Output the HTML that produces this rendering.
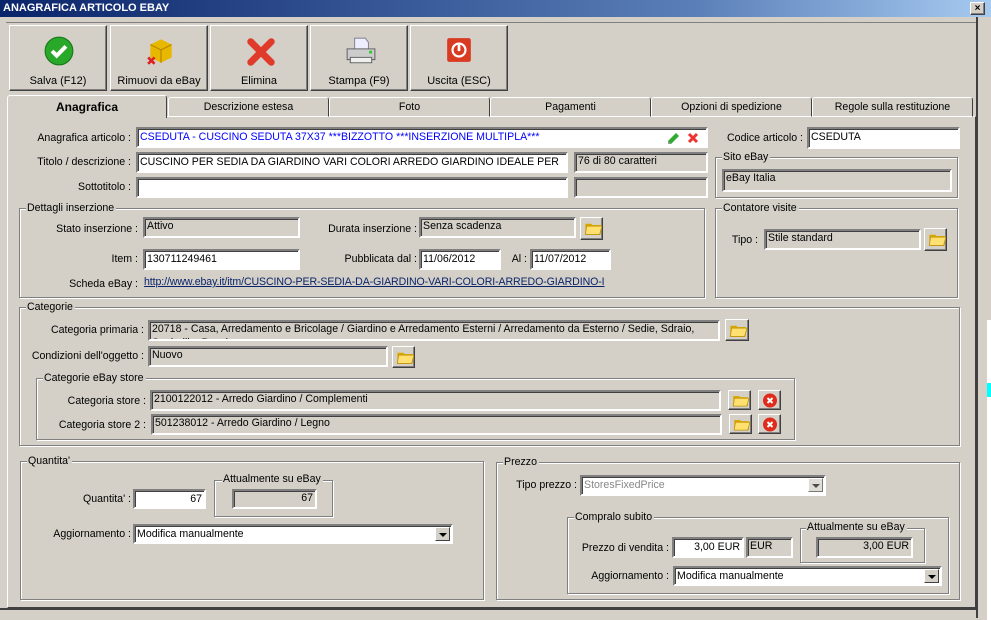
<!DOCTYPE html>
<html><head><meta charset="utf-8"><style>
*{box-sizing:border-box;margin:0;padding:0}
body{width:991px;height:618px;overflow:hidden;background:#d4d0c8;font-family:"Liberation Sans",sans-serif;font-size:10.6px;color:#000;position:relative}
.a{position:absolute}
.l{position:absolute;text-align:right;white-space:nowrap;line-height:14px}
.in{position:absolute;background:#fff;border:2px solid;border-color:#808080 #fff #fff #808080;box-shadow:inset 1px 1px 0 #404040;padding:1px 2px;white-space:nowrap;overflow:hidden;line-height:14px}
.ro{position:absolute;background:#d4d0c8;border:2px solid;border-color:#808080 #fff #fff #808080;box-shadow:inset 1px 1px 0 #404040;padding:0 2px;white-space:nowrap;overflow:hidden;line-height:14px}
.g{position:absolute;border:1px solid #808080;box-shadow:1px 1px 0 #fff,inset 1px 1px 0 #fff}
.g>span{position:absolute;top:-8px;left:6px;background:#d4d0c8;padding:0 2px 0 1px;line-height:14px;white-space:nowrap}
.btn{position:absolute;background:#d4d0c8;border:1px solid;border-color:#fff #404040 #404040 #fff;box-shadow:inset -1px -1px 0 #808080}
.btn svg{position:absolute;left:2px;top:1px}
.tb{position:absolute;top:25px;width:98px;height:66px;background:#d4d0c8;border:1px solid;border-color:#fff #404040 #404040 #fff;box-shadow:inset -1px -1px 0 #808080;text-align:center}
.tb .t{position:absolute;left:0;right:0;top:49px;font-size:11px}
.tb svg{position:absolute;left:34px;top:10px}
.tab{position:absolute;top:97px;height:20px;border:1px solid;border-color:#fff #404040 transparent #fff;border-radius:3px 3px 0 0;text-align:center;line-height:18px}
.dd{position:absolute;right:1px;top:1px;width:15px;height:14px;background:#d4d0c8;border:1px solid;border-color:#fff #404040 #404040 #fff}
.dd:after{content:"";position:absolute;left:3px;top:5px;border:4px solid transparent;border-top:4px solid #000;border-bottom:0}
</style></head><body>
<div class="a" style="left:0;top:0;width:991px;height:17px;background:linear-gradient(90deg,#0a246a,#5a7fb8 70%,#a6caf0);color:#fff;font-weight:bold;font-size:11px;line-height:17px;padding-left:3px">ANAGRAFICA ARTICOLO EBAY</div>
<div class="btn" style="left:970px;top:2px;width:15px;height:13px;font-size:10px;line-height:11px;text-align:center;font-weight:bold">×</div>
<div class="a" style="left:976px;top:17px;width:2px;height:601px;background:#404040"></div>
<div class="a" style="left:978px;top:17px;width:13px;height:601px;background:#d4d0c8"></div>
<div class="a" style="left:987px;top:320px;width:4px;height:300px;background:#fff"></div>
<div class="a" style="left:987px;top:383px;width:4px;height:14px;background:#0ff"></div>
<div class="a" style="left:0;top:608px;width:976px;height:10px;background:#d4d0c8;border-top:2px solid #404040"></div>
<div class="a" style="left:6px;top:22px;width:970px;height:1px;background:#808080"></div>

<div class="tb" style="left:9px"><svg width="30" height="30" viewBox="0 0 26 26"><circle cx="13" cy="13" r="12" fill="#2aa82a" stroke="#177a17"/><path d="M7 13l4 4 8-8" stroke="#fff" stroke-width="3.5" fill="none"/></svg><div class="t">Salva (F12)</div></div>
<div class="tb" style="left:110px"><svg width="32" height="30" viewBox="0 0 28 28"><path d="M4 8l10-5 10 5v12l-10 5-10-5z" fill="#e8b800"/><path d="M4 8l10 5 10-5" stroke="#b08000" fill="none"/><path d="M14 13v12" stroke="#b08000"/><path d="M2 20l6 6M8 20l-6 6" stroke="#d22" stroke-width="2.5"/></svg><div class="t">Rimuovi da eBay</div></div>
<div class="tb" style="left:210px"><svg width="32" height="32" viewBox="0 0 28 28"><path d="M5 5l18 18M23 5L5 23" stroke="#e03a2a" stroke-width="6" stroke-linecap="round"/></svg><div class="t">Elimina</div></div>
<div class="tb" style="left:310px"><svg width="32" height="30" viewBox="0 0 30 28"><path d="M9 2h10l3 4v8H9z" fill="#eef" stroke="#889"/><path d="M2 12h26v10H2z" fill="#ccc" stroke="#666"/><path d="M5 20h20v5H5z" fill="#eee" stroke="#666"/><circle cx="24" cy="15" r="1.5" fill="#3c3"/></svg><div class="t">Stampa (F9)</div></div>
<div class="tb" style="left:410px"><svg width="28" height="28" viewBox="0 0 26 26"><rect x="2" y="2" width="22" height="22" rx="2" fill="#d83a22"/><circle cx="13" cy="13" r="6" stroke="#fff" stroke-width="2" fill="none"/><path d="M13 8v6" stroke="#fff" stroke-width="2.5"/></svg><div class="t">Uscita (ESC)</div></div>

<div class="a" style="left:7px;top:116px;width:969px;height:492px;border:1px solid;border-color:#fff #404040 #404040 #fff"></div>
<div class="tab" style="left:168px;width:161px">Descrizione estesa</div>
<div class="tab" style="left:329px;width:161px">Foto</div>
<div class="tab" style="left:490px;width:161px">Pagamenti</div>
<div class="tab" style="left:651px;width:161px">Opzioni di spedizione</div>
<div class="tab" style="left:812px;width:161px">Regole sulla restituzione</div>
<div class="tab" style="left:7px;top:95px;width:160px;height:23px;background:#d4d0c8;font-weight:bold;font-size:12px;line-height:22px;border-bottom:none">Anagrafica</div>

<div class="l" style="right:860px;top:131px">Anagrafica articolo :</div>
<div class="in" style="left:136px;top:127px;width:572px;height:21px;color:#00f">CSEDUTA - CUSCINO SEDUTA 37X37 ***BIZZOTTO ***INSERZIONE MULTIPLA***</div>
<svg class="a" style="left:666px;top:131px" width="14" height="14" viewBox="0 0 14 14"><path d="M2 10l8-8 3 3-8 8-3 0z" fill="#3a3"/><path d="M2 10l0 3 3 0" fill="#999"/></svg>
<svg class="a" style="left:687px;top:132px" width="12" height="12" viewBox="0 0 12 12"><path d="M2 2l8 8M10 2L2 10" stroke="#e33" stroke-width="3"/></svg>
<div class="l" style="right:860px;top:155px">Titolo / descrizione :</div>
<div class="in" style="left:136px;top:152px;width:432px;height:21px">CUSCINO PER SEDIA DA GIARDINO VARI COLORI ARREDO GIARDINO IDEALE PER</div>
<div class="ro" style="left:574px;top:152px;width:134px;height:21px">76 di 80 caratteri</div>
<div class="l" style="right:860px;top:180px">Sottotitolo :</div>
<div class="in" style="left:136px;top:177px;width:432px;height:21px"></div>
<div class="ro" style="left:574px;top:177px;width:134px;height:21px"></div>

<div class="l" style="right:188px;top:131px">Codice articolo :</div>
<div class="in" style="left:807px;top:127px;width:153px;height:22px">CSEDUTA</div>
<div class="g" style="left:715px;top:157px;width:243px;height:41px"><span>Sito eBay</span></div>
<div class="ro" style="left:722px;top:169px;width:230px;height:23px">eBay Italia</div>

<div class="g" style="left:19px;top:208px;width:686px;height:90px"><span>Dettagli inserzione</span></div>
<div class="l" style="right:853px;top:222px">Stato inserzione :</div>
<div class="ro" style="left:143px;top:217px;width:157px;height:21px">Attivo</div>
<div class="l" style="right:574px;top:222px">Durata inserzione :</div>
<div class="ro" style="left:419px;top:217px;width:157px;height:21px">Senza scadenza</div>
<div class="btn" style="left:580px;top:217px;width:23px;height:23px"><svg width="19" height="19" viewBox="2 4 16 14"><path d="M4 7h5l1 1h7v8H4z" fill="#d9a800"/><path d="M5 9h13l-2 7H4z" fill="#ffe070" stroke="#c09000" stroke-width=".7"/></svg></div>
<div class="l" style="right:853px;top:252px">Item :</div>
<div class="in" style="left:143px;top:249px;width:157px;height:21px">130711249461</div>
<div class="l" style="right:574px;top:252px">Pubblicata dal :</div>
<div class="in" style="left:419px;top:249px;width:82px;height:21px">11/06/2012</div>
<div class="l" style="right:464px;top:252px">Al :</div>
<div class="in" style="left:530px;top:249px;width:81px;height:21px">11/07/2012</div>
<div class="l" style="right:853px;top:277px">Scheda eBay :</div>
<div class="a" style="left:144px;top:275px;color:#0a246a;text-decoration:underline;line-height:14px;letter-spacing:-0.1px">http://www.ebay.it/itm/CUSCINO-PER-SEDIA-DA-GIARDINO-VARI-COLORI-ARREDO-GIARDINO-I</div>

<div class="g" style="left:715px;top:208px;width:243px;height:90px"><span>Contatore visite</span></div>
<div class="l" style="right:233px;top:233px">Tipo :</div>
<div class="ro" style="left:764px;top:229px;width:157px;height:21px">Stile standard</div>
<div class="btn" style="left:924px;top:228px;width:23px;height:23px"><svg width="19" height="19" viewBox="2 4 16 14"><path d="M4 7h5l1 1h7v8H4z" fill="#d9a800"/><path d="M5 9h13l-2 7H4z" fill="#ffe070" stroke="#c09000" stroke-width=".7"/></svg></div>

<div class="g" style="left:19px;top:307px;width:941px;height:139px"><span>Categorie</span></div>
<div class="l" style="right:847px;top:323px">Categoria primaria :</div>
<div class="ro" style="left:148px;top:320px;width:572px;height:21px;white-space:normal;line-height:14px">20718 - Casa, Arredamento e Bricolage / Giardino e Arredamento Esterni / Arredamento da Esterno / Sedie, Sdraio, Sgabelli e Panche</div>
<div class="btn" style="left:725px;top:319px;width:24px;height:22px"><svg width="19" height="19" viewBox="2 4 16 14"><path d="M4 7h5l1 1h7v8H4z" fill="#d9a800"/><path d="M5 9h13l-2 7H4z" fill="#ffe070" stroke="#c09000" stroke-width=".7"/></svg></div>
<div class="l" style="right:847px;top:349px">Condizioni dell'oggetto :</div>
<div class="ro" style="left:148px;top:346px;width:240px;height:21px">Nuovo</div>
<div class="btn" style="left:392px;top:346px;width:23px;height:22px"><svg width="19" height="19" viewBox="2 4 16 14"><path d="M4 7h5l1 1h7v8H4z" fill="#d9a800"/><path d="M5 9h13l-2 7H4z" fill="#ffe070" stroke="#c09000" stroke-width=".7"/></svg></div>
<div class="g" style="left:36px;top:378px;width:759px;height:62px"><span>Categorie eBay store</span></div>
<div class="l" style="right:845px;top:394px">Categoria store :</div>
<div class="ro" style="left:150px;top:390px;width:571px;height:21px">2100122012 - Arredo Giardino / Complementi</div>
<div class="l" style="right:845px;top:418px">Categoria store 2 :</div>
<div class="ro" style="left:151px;top:414px;width:571px;height:21px">501238012 - Arredo Giardino / Legno</div>
<div class="btn" style="left:728px;top:390px;width:23px;height:20px"><svg width="18" height="17" viewBox="2 4 16 14"><path d="M4 7h5l1 1h7v8H4z" fill="#d9a800"/><path d="M5 9h13l-2 7H4z" fill="#ffe070" stroke="#c09000" stroke-width=".7"/></svg></div>
<div class="btn" style="left:758px;top:390px;width:23px;height:20px"><svg width="18" height="17" viewBox="1 1 18 16"><circle cx="10" cy="9" r="7" fill="#e02a1a"/><path d="M7.5 6.5l5 5M12.5 6.5l-5 5" stroke="#fff" stroke-width="2"/></svg></div>
<div class="btn" style="left:729px;top:414px;width:23px;height:20px"><svg width="18" height="17" viewBox="2 4 16 14"><path d="M4 7h5l1 1h7v8H4z" fill="#d9a800"/><path d="M5 9h13l-2 7H4z" fill="#ffe070" stroke="#c09000" stroke-width=".7"/></svg></div>
<div class="btn" style="left:758px;top:414px;width:23px;height:20px"><svg width="18" height="17" viewBox="1 1 18 16"><circle cx="10" cy="9" r="7" fill="#e02a1a"/><path d="M7.5 6.5l5 5M12.5 6.5l-5 5" stroke="#fff" stroke-width="2"/></svg></div>

<div class="g" style="left:20px;top:461px;width:464px;height:139px"><span>Quantita'</span></div>
<div class="l" style="right:860px;top:492px">Quantita' :</div>
<div class="in" style="left:133px;top:489px;width:73px;height:20px;text-align:right">67</div>
<div class="g" style="left:214px;top:480px;width:119px;height:37px"><span style="top:-9px;left:7px">Attualmente su eBay</span></div>
<div class="ro" style="left:232px;top:489px;width:85px;height:20px;text-align:right">67</div>
<div class="l" style="right:860px;top:527px">Aggiornamento :</div>
<div class="in" style="left:133px;top:524px;width:320px;height:20px">Modifica manualmente<div class="dd"></div></div>

<div class="g" style="left:496px;top:462px;width:464px;height:138px"><span>Prezzo</span></div>
<div class="l" style="right:414px;top:478px">Tipo prezzo :</div>
<div class="in" style="left:580px;top:475px;width:246px;height:21px;color:#888">StoresFixedPrice<div class="dd" style="opacity:.7"></div></div>
<div class="g" style="left:567px;top:517px;width:382px;height:77px"><span>Compralo subito</span></div>
<div class="l" style="right:322px;top:541px">Prezzo di vendita :</div>
<div class="in" style="left:672px;top:537px;width:72px;height:21px;text-align:right">3,00 EUR</div>
<div class="ro" style="left:746px;top:537px;width:47px;height:21px">EUR</div>
<div class="g" style="left:800px;top:528px;width:125px;height:35px"><span style="top:-9px;left:5px">Attualmente su eBay</span></div>
<div class="ro" style="left:816px;top:537px;width:97px;height:21px;text-align:right">3,00 EUR</div>
<div class="l" style="right:322px;top:569px">Aggiornamento :</div>
<div class="in" style="left:673px;top:566px;width:269px;height:20px">Modifica manualmente<div class="dd"></div></div>
</body></html>
